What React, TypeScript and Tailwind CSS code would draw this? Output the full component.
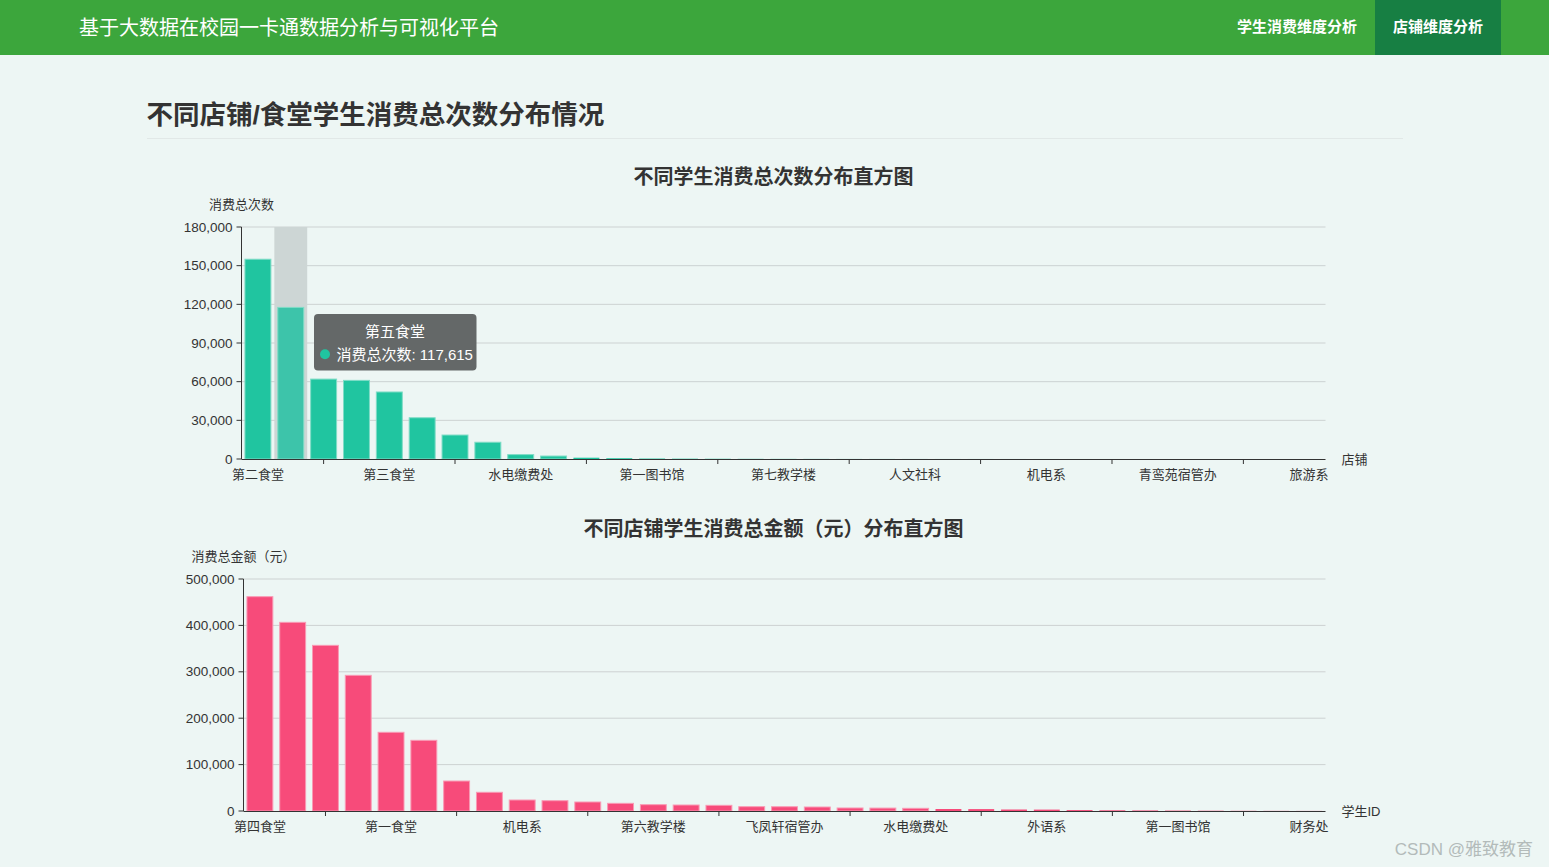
import React from 'react';

const countLabels = ['第二食堂', '第三食堂', '水电缴费处', '第一图书馆', '第七教学楼', '人文社科', '机电系', '青鸾苑宿管办', '旅游系'];
const amountLabels = ['第四食堂', '第一食堂', '机电系', '第六教学楼', '飞凤轩宿管办', '水电缴费处', '外语系', '第一图书馆', '财务处'];

const countData = [
  155000, 117615, 62000, 61000, 52000, 32000, 18600, 13000, 3400, 2300, 1000, 600, 350, 250, 180, 120, 90,
  70, 50, 40, 30, 25, 20, 15, 12, 10, 8, 6, 5, 4, 3, 2, 1,
];
const amountData = [
  461900, 406600, 357000, 292400, 169600, 152300, 64600, 40300, 23700, 22200, 19400, 16500, 13600, 12900,
  12200, 9300, 9200, 8600, 6500, 6300, 5800, 4300, 4100, 3200, 3000, 2000, 1500, 1200, 900, 600, 400, 300, 200,
];

type ChartProps = {
  title: string;
  yName: string;
  xName: string;
  left: number;
  data: number[];
  labels: string[];
  max: number;
  step: number;
  color: string;
  stroke: string;
  tooltip?: boolean;
};

const fmt = (n: number) => n.toLocaleString('en-US');

function BarChart({ title, yName, xName, left, data, labels, max, step, color, stroke, tooltip }: ChartProps) {
  const right = 1178.5;
  const top = 77;
  const bottom = 309;
  const cw = (right - left) / data.length;
  const bw = cw * 0.79;
  const y = (v: number) => bottom - (v / max) * (bottom - top);
  const ticks: number[] = [];
  for (let v = 0; v <= max; v += step) ticks.push(v);

  return (
    <svg width={1256} height={352} className="block">
      <text x={626.5} y={27} textAnchor="middle" dominantBaseline="central" fontSize={20} fontWeight={700} fill="#333">
        {title}
      </text>
      <text x={left} y={54} textAnchor="middle" dominantBaseline="central" fontSize={13} fill="#333">
        {yName}
      </text>

      {/* grid + y labels */}
      {ticks.map((v) => (
        <g key={v}>
          {v > 0 && <line x1={left} x2={right} y1={y(v)} y2={y(v)} stroke="#cdd2d2" strokeWidth={1} />}
          <line x1={left - 5} x2={left} y1={y(v)} y2={y(v)} stroke="#333" strokeWidth={1} />
          <text x={left - 9} y={y(v)} textAnchor="end" dominantBaseline="central" fontSize={13.5} fill="#333">
            {fmt(v)}
          </text>
        </g>
      ))}

      {/* hover shadow */}
      {tooltip && <rect x={left + cw} y={top} width={cw} height={bottom - top} fill="#cdd6d5" />}

      {/* bars */}
      {data.map((v, i) => {
        const h = (v / max) * (bottom - top);
        const hl = tooltip && i === 1;
        return (
          <rect
            key={i}
            x={left + i * cw + (cw - bw) / 2}
            y={bottom - h}
            width={bw}
            height={h}
            fill={hl ? '#3dc4aa' : color}
            stroke={h > 2 ? stroke : 'none'}
            strokeWidth={1}
          />
        );
      })}

      {/* axes */}
      <line x1={left} x2={left} y1={top} y2={bottom} stroke="#333" strokeWidth={1} />
      <line x1={left} x2={right} y1={bottom + 0.5} y2={bottom + 0.5} stroke="#333" strokeWidth={1} />
      {Array.from({ length: 8 }).map((_, k) => {
        const tx = left + (2.5 + 4 * k) * cw;
        return <line key={k} x1={tx} x2={tx} y1={bottom} y2={bottom + 5} stroke="#333" strokeWidth={1} />;
      })}
      {labels.map((l, k) => (
        <text
          key={l + k}
          x={left + (4 * k + 0.5) * cw}
          y={bottom + 15}
          textAnchor="middle"
          dominantBaseline="central"
          fontSize={13}
          fill="#333"
        >
          {l}
        </text>
      ))}
      <text x={1194.5} y={bottom} dominantBaseline="central" fontSize={13} fill="#333">
        {xName}
      </text>

      {tooltip && (
        <g>
          <rect x={167} y={164} width={162.5} height={56.5} rx={4} fill="#646868" />
          <text x={248} y={181.5} textAnchor="middle" dominantBaseline="central" fontSize={15} fill="#fff">
            第五食堂
          </text>
          <circle cx={178} cy={204.3} r={5} fill="#20c5a0" />
          <text x={189.5} y={204.3} dominantBaseline="central" fontSize={15} fill="#fff">
            消费总次数: 117,615
          </text>
        </g>
      )}
    </svg>
  );
}

export default function App() {
  return (
    <div className="min-h-[867px] bg-[#edf6f4] font-['Liberation_Sans','Noto_Sans_CJK_SC',sans-serif] text-[#333] relative">
      {/* Top bar */}
      <header className="h-[55px] bg-[#3ca63c] flex items-center justify-between pl-[79px] pr-[48px]">
        <h1 className="text-[20px] text-white font-normal">基于大数据在校园一卡通数据分析与可视化平台</h1>
        <nav className="flex h-full">
          <a className="h-full flex items-center px-[18px] text-[15px] font-bold text-white">学生消费维度分析</a>
          <a className="h-full flex items-center px-[18px] text-[15px] font-bold text-white bg-[#177f43]">店铺维度分析</a>
        </nav>
      </header>

      <main className="w-[1256px] mx-auto">
        <div className="pt-[43px] pb-[5px] border-b border-[#e1e8e7]">
          <h2 className="text-[26.5px] leading-[35px] font-bold text-[#333]">不同店铺/食堂学生消费总次数分布情况</h2>
        </div>

        <div className="mt-[11px] flex flex-col">
          <BarChart
            title="不同学生消费总次数分布直方图"
            yName="消费总次数"
            xName="店铺"
            left={94.5}
            data={countData}
            labels={countLabels}
            max={180000}
            step={30000}
            color="#20c5a0"
            stroke="#7fdcc6"
            tooltip
          />
          <BarChart
            title="不同店铺学生消费总金额（元）分布直方图"
            yName="消费总金额（元）"
            xName="学生ID"
            left={96.5}
            data={amountData}
            labels={amountLabels}
            max={500000}
            step={100000}
            color="#f74b7a"
            stroke="#f99ab4"
          />
        </div>
      </main>

      <div className="absolute right-[16px] bottom-[5px] text-[17px] text-[#b3bbba]">CSDN @雅致教育</div>
    </div>
  );
}
